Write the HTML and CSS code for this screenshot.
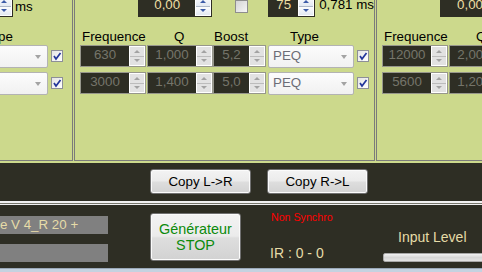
FILE: index.html
```html
<!DOCTYPE html>
<html lang="fr">
<head>
    <meta charset="UTF-8">
    <title>Egaliseur</title>
    <link rel="stylesheet" href="styles.css">
</head>
<body>
    <div class="top">
        <!-- channel panels, left one is mostly scrolled out -->
        <div class="panel panel-left">
            <div class="row-top">
                <div class="spin on t-left"><span class="val"></span><span class="arrows"><i class="up"></i><i class="dn"></i></span></div>
                <span class="t-ms">ms</span>
            </div>
            <div class="labels">
                <span class="c-freq"></span><span class="c-q"></span><span class="c-boost"></span><span class="c-type">Type</span>
            </div>
            <div class="row">
                <div class="spin c-freq"><span class="val"></span><span class="arrows"><i class="up"></i><i class="dn"></i></span></div>
                <div class="spin c-q"><span class="val"></span><span class="arrows"><i class="up"></i><i class="dn"></i></span></div>
                <div class="spin c-boost"><span class="val"></span><span class="arrows"><i class="up"></i><i class="dn"></i></span></div>
                <div class="combo c-type"><span></span></div>
                <span class="chk c-chk"><svg viewBox="0 0 10 10"><polyline points="2,5 4,8 8.5,2"/></svg></span>
            </div>
            <div class="row">
                <div class="spin c-freq"><span class="val"></span><span class="arrows"><i class="up"></i><i class="dn"></i></span></div>
                <div class="spin c-q"><span class="val"></span><span class="arrows"><i class="up"></i><i class="dn"></i></span></div>
                <div class="spin c-boost"><span class="val"></span><span class="arrows"><i class="up"></i><i class="dn"></i></span></div>
                <div class="combo c-type"><span></span></div>
                <span class="chk c-chk"><svg viewBox="0 0 10 10"><polyline points="2,5 4,8 8.5,2"/></svg></span>
            </div>
        </div>

        <div class="panel panel-mid">
            <div class="row-top">
                <div class="spin on t-main"><span class="val">0,00</span><span class="arrows"><i class="up"></i><i class="dn"></i></span></div>
                <span class="t-chk"></span>
                <div class="spin on t-small"><span class="val">75</span><span class="arrows"><i class="up"></i><i class="dn"></i></span></div>
                <span class="t-text">0,781 ms</span>
            </div>
            <div class="labels">
                <span class="c-freq">Frequence</span><span class="c-q">Q</span><span class="c-boost">Boost</span><span class="c-type">Type</span>
            </div>
            <div class="row">
                <div class="spin c-freq"><span class="val">630</span><span class="arrows"><i class="up"></i><i class="dn"></i></span></div>
                <div class="spin c-q"><span class="val">1,000</span><span class="arrows"><i class="up"></i><i class="dn"></i></span></div>
                <div class="spin c-boost"><span class="val">5,2</span><span class="arrows"><i class="up"></i><i class="dn"></i></span></div>
                <div class="combo c-type"><span>PEQ</span></div>
                <span class="chk c-chk"><svg viewBox="0 0 10 10"><polyline points="2,5 4,8 8.5,2"/></svg></span>
            </div>
            <div class="row">
                <div class="spin c-freq"><span class="val">3000</span><span class="arrows"><i class="up"></i><i class="dn"></i></span></div>
                <div class="spin c-q"><span class="val">1,400</span><span class="arrows"><i class="up"></i><i class="dn"></i></span></div>
                <div class="spin c-boost"><span class="val">5,0</span><span class="arrows"><i class="up"></i><i class="dn"></i></span></div>
                <div class="combo c-type"><span>PEQ</span></div>
                <span class="chk c-chk"><svg viewBox="0 0 10 10"><polyline points="2,5 4,8 8.5,2"/></svg></span>
            </div>
        </div>

        <div class="panel panel-right">
            <div class="row-top">
                <div class="spin on t-main"><span class="val">0,00</span><span class="arrows"><i class="up"></i><i class="dn"></i></span></div>
            </div>
            <div class="labels">
                <span class="c-freq">Frequence</span><span class="c-q">Q</span>
            </div>
            <div class="row">
                <div class="spin c-freq"><span class="val">12000</span><span class="arrows"><i class="up"></i><i class="dn"></i></span></div>
                <div class="spin c-q"><span class="val">2,000</span><span class="arrows"><i class="up"></i><i class="dn"></i></span></div>
            </div>
            <div class="row">
                <div class="spin c-freq"><span class="val">5600</span><span class="arrows"><i class="up"></i><i class="dn"></i></span></div>
                <div class="spin c-q"><span class="val">1,200</span><span class="arrows"><i class="up"></i><i class="dn"></i></span></div>
            </div>
        </div>
    </div>

    <div class="copy-bar">
        <button class="btn btn-copy">Copy L-&gt;R</button>
        <button class="btn btn-copy">Copy R-&gt;L</button>
    </div>
    <div class="sep"></div>

    <div class="bottom">
        <div class="col-info">
            <div class="info">e V 4_R 20 +</div>
            <div class="info"></div>
        </div>
        <button class="btn btn-gen">Générateur<br>STOP</button>
        <div class="col-status">
            <div class="sync">Non Synchro</div>
            <div class="ir">IR : 0 - 0</div>
        </div>
        <div class="col-level">
            <div class="level-label">Input Level</div>
            <div class="level-bar"></div>
        </div>
    </div>
    <div class="status"></div>
</body>
</html>
```

FILE: styles.css
```css
body {
    margin: 0;
    width: 482px;
    height: 272px;
    overflow: hidden;
    background-color: #2e2e24;
    font-family: "Liberation Sans", Arial, sans-serif;
    font-size: 13.33px;
}
.top {
    display: flex;
    height: 163px;
    overflow: hidden;
    background-color: #ccd98c;
}
.panel {
    flex: none;
    width: 301px;
    height: 171px;
    margin-top: -10px;
    margin-left: 1px;
    border: 1px solid #7b7b7b;
    box-sizing: border-box;
}
.panel-left {
    width: 305px;
    margin-left: -232px;
}
.row-top {
    display: flex;
    align-items: center;
    height: 22px;
    margin-top: 4px;
}
.labels {
    display: flex;
    height: 16px;
    line-height: 16px;
    margin-top: 12px;
    color: #000;
}
.row {
    display: flex;
    align-items: center;
    height: 22px;
}
.row + .row {
    margin-top: 5px;
}

/* columns shared by labels and rows */
.c-freq { flex: none; width: 66px; margin-left: 5px; }
.c-q { flex: none; width: 66px; margin-left: 1px; }
.c-boost { flex: none; width: 53px; }
.c-type { flex: none; width: 86px; margin-left: 2px; }
.c-chk { flex: none; margin-left: 3px; }
.labels span { box-sizing: border-box; }
.labels .c-freq { padding-left: 2px; }
.labels .c-q { padding-left: 27px; }
.labels .c-boost { padding-left: 1px; }
.labels .c-type { padding-left: 22px; }

/* spin boxes */
.spin {
    display: flex;
    height: 22px;
    box-sizing: border-box;
    border: 1px solid #97978c;
    background-color: #2e2e24;
}
.spin .val {
    flex: 1;
    text-align: center;
    line-height: 18px;
    color: #75756a;
}
.arrows {
    flex: none;
    display: flex;
    flex-direction: column;
    width: 16px;
    padding: 1px;
    box-sizing: border-box;
    background-color: #fff;
}
.arrows i {
    flex: 1;
    display: flex;
    align-items: center;
    justify-content: center;
    background-color: #e2e2e2;
}
.arrows .dn {
    border-top: 1px solid #bcbcbc;
}
.arrows .up::before {
    content: "";
    border: 3px solid transparent;
    border-top: 0;
    border-bottom-color: #a2a2a2;
}
.arrows .dn::before {
    content: "";
    border: 3px solid transparent;
    border-bottom: 0;
    border-top-color: #a2a2a2;
}
.spin.on {
    border-color: #2e2e24;
}
.spin.on .val {
    color: #ecdfa4;
}
.spin.on .arrows i {
    background: linear-gradient(#fdfdfd, #e3e9f2);
}
.spin.on .arrows .dn {
    border-top-color: #aeb8c8;
}
.spin.on .arrows .up::before { border-bottom-color: #3d5ca8; }
.spin.on .arrows .dn::before { border-top-color: #3d5ca8; }

.t-main { width: 76px; margin-left: 63px; }
.t-small { width: 48px; margin-left: 20px; }
.t-left { width: 48px; margin-left: 196px; }
.t-chk {
    width: 13px;
    height: 13px;
    margin-left: 23px;
    box-sizing: border-box;
    border: 1px solid #8e8e8e;
    background: linear-gradient(135deg, #d4d4d4, #f6f6f6);
}
.t-text {
    margin-left: 4px;
    margin-bottom: 3px;
    white-space: nowrap;
}
.t-ms {
    margin-left: 2px;
}

/* combo box */
.combo {
    position: relative;
    height: 23px;
    box-sizing: border-box;
    border: 1px solid #b3b3b3;
    border-radius: 2px;
    background: linear-gradient(#fcfcfc, #f1f1f1);
    padding-left: 4px;
    line-height: 20px;
    color: #6c6d76;
}
.combo::after {
    content: "";
    position: absolute;
    right: 6px;
    top: 9px;
    border: 3px solid transparent;
    border-bottom: 0;
    border-top: 4px solid #a3a3a3;
}

.chk {
    width: 12px;
    height: 12px;
    box-sizing: border-box;
    border: 1px solid #8d8f98;
    background: linear-gradient(135deg, #e4e4e4, #ffffff);
}
.chk svg {
    display: block;
    width: 10px;
    height: 10px;
    fill: none;
    stroke: #22359a;
    stroke-width: 1.7;
}

/* buttons */
.btn {
    font-family: "Liberation Sans", Arial, sans-serif;
    font-size: 13.33px;
    color: #000;
    border: 1px solid #707070;
    border-radius: 3px;
    background: linear-gradient(#f3f3f3 0%, #ebebeb 48%, #dedede 52%, #d2d2d2 100%);
    box-shadow: inset 0 0 0 1px #fbfbfb;
    padding: 0;
}
.copy-bar {
    display: flex;
    height: 38px;
    padding-left: 150px;
    box-sizing: border-box;
    padding-top: 6px;
    gap: 16px;
}
.btn-copy {
    width: 101px;
    height: 25px;
}
.sep {
    height: 1px;
    border-top: 2px solid #f2f2f2;
    border-bottom: 1px solid #f2f2f2;
    background-color: #77776c;
}
.bottom {
    display: flex;
    align-items: flex-start;
    height: 63px;
    color: #e6dca8;
}
.col-info {
    width: 108px;
    margin-top: 11px;
}
.info {
    height: 18px;
    line-height: 18px;
    background-color: #808080;
    white-space: nowrap;
}
.info + .info {
    margin-top: 10px;
}
.btn-gen {
    width: 91px;
    height: 48px;
    margin-left: 42px;
    margin-top: 8px;
    font-size: 14.4px;
    line-height: 16px;
    color: #0b8a0b;
}
.col-status {
    width: 113px;
    margin-left: 29px;
}
.sync {
    margin-top: 6px;
    margin-left: 1px;
    font-size: 10.67px;
    line-height: 13px;
    color: #ff0000;
}
.ir {
    margin-top: 21px;
    font-size: 14px;
    line-height: 16px;
}
.col-level {
    flex: 1;
    margin-top: 24px;
}
.level-label {
    padding-left: 15px;
    font-size: 14px;
    line-height: 16px;
}
.level-bar {
    height: 9px;
    margin-top: 8px;
    margin-right: -10px;
    box-sizing: border-box;
    border: 1px solid #a8a8a8;
    border-radius: 2px;
    background: linear-gradient(#f2f2f2, #d6d6d6 50%, #e4e4e4);
}
.status {
    height: 4px;
    border-top: 1px solid #9aa8b8;
    background-color: #c4d2e0;
}
```
